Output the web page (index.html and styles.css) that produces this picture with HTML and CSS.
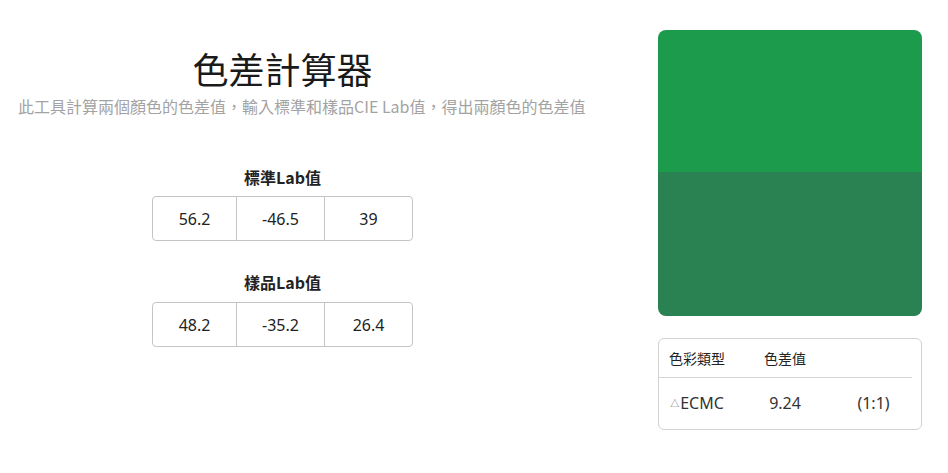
FILE: index.html
```html
<!DOCTYPE html>
<html lang="zh-Hant">
<head>
<meta charset="utf-8">
<title>色差計算器</title>
<link rel="stylesheet" href="styles.css">
</head>
<body>
<div class="page">
  <section class="calc">
    <h1 class="title">色差計算器</h1>
    <p class="subtitle">此工具計算兩個顏色的色差值，輸入標準和樣品CIE Lab值，得出兩顏色的色差值</p>
    <div class="group group-std">
      <div class="label">標準Lab值</div>
      <div class="lab-box">
        <div class="cell">56.2</div>
        <div class="cell">-46.5</div>
        <div class="cell">39</div>
      </div>
    </div>
    <div class="group group-smp">
      <div class="label">樣品Lab值</div>
      <div class="lab-box">
        <div class="cell">48.2</div>
        <div class="cell">-35.2</div>
        <div class="cell">26.4</div>
      </div>
    </div>
  </section>
  <aside class="result">
    <div class="swatch">
      <div class="swatch-std"></div>
      <div class="swatch-smp"></div>
    </div>
    <div class="table-card">
      <div class="trow thead">
        <div class="tc">色彩類型</div>
        <div class="tc">色差值</div>
        <div class="tc"></div>
      </div>
      <div class="trow tbody">
        <div class="tc"><span class="delta">△</span>ECMC</div>
        <div class="tc">9.24</div>
        <div class="tc">(1:1)</div>
      </div>
    </div>
  </aside>
</div>
</body>
</html>
```

FILE: styles.css
```css
* { box-sizing: border-box; }
html, body { margin: 0; padding: 0; background: #fff; }
body {
  font-family: "Noto Sans", "Noto Sans CJK TC", sans-serif;
  color: #222;
}
.page {
  display: flex;
  align-items: flex-start;
}
.calc {
  width: 565px;
  display: flex;
  flex-direction: column;
  align-items: center;
}
.title {
  margin: 46px 0 0;
  font-family: "Noto Sans CJK TC", sans-serif;
  font-size: 36px;
  line-height: 44px;
  font-weight: 400;
  color: #1a1a1a;
}
.subtitle {
  align-self: flex-start;
  margin: 4px 0 0 18px;
  white-space: nowrap;
  font-size: 16px;
  line-height: 24px;
  color: #a3a3a3;
  font-family: "Noto Sans CJK TC", sans-serif;
}
.group { display: flex; flex-direction: column; align-items: center; }
.group-std { margin-top: 47px; }
.group-smp { margin-top: 29px; }
.label {
  font-family: "Noto Sans CJK TC", sans-serif;
  font-weight: 700;
  font-size: 16px;
  line-height: 24px;
  color: #222;
}
.lab-box {
  margin-top: 7px;
  width: 261px;
  height: 45px;
  border: 1px solid #c4c4c4;
  border-radius: 4px;
  display: grid;
  grid-template-columns: 83px 88px 88px;
}
.group-smp .lab-box { margin-top: 8px; }
.cell {
  display: flex;
  align-items: center;
  justify-content: center;
  font-size: 16px;
  color: #222;
}
.cell + .cell { border-left: 1px solid #c4c4c4; }

.result {
  margin-left: 93px;
  margin-top: 30px;
  width: 264px;
}
.swatch {
  height: 286px;
  border-radius: 8px;
  overflow: hidden;
  display: flex;
  flex-direction: column;
}
.swatch-std { height: 142px; background: #1d9b4d; }
.swatch-smp { flex: 1; background: #2a8151; }
.table-card {
  margin-top: 22px;
  height: 92px;
  border: 1px solid #d2d2d2;
  border-radius: 6px;
  padding-right: 9px;
}
.trow {
  display: grid;
  grid-template-columns: 76px 100px 77px;
  align-items: center;
}
.thead {
  height: 39px;
  border-bottom: 1px solid #d6d6d6;
  font-family: "Noto Sans CJK TC", sans-serif;
  font-size: 14px;
  color: #222;
}
.tbody {
  height: 50px;
  font-size: 16px;
  color: #333;
}
.tc { text-align: center; }
.delta { font-size: 9px; color: #666; vertical-align: 2px; margin-right: 1px; }
```
